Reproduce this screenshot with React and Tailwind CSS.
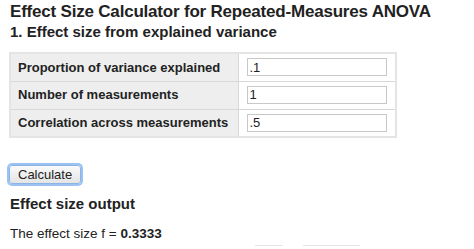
export default function App() {
  const rows = [
    { label: 'Proportion of variance explained', value: '.1' },
    { label: 'Number of measurements', value: '1' },
    { label: 'Correlation across measurements', value: '.5' },
  ];

  return (
    <div className="h-[249px] overflow-hidden bg-white px-[10px] pt-[1px] text-[#222] font-['Liberation_Sans',Arial,sans-serif]">
      <h1 className="text-[17px] font-bold leading-[22px] whitespace-nowrap tracking-[-0.2px]">
        Effect Size Calculator for Repeated-Measures ANOVA
      </h1>
      <h2 className="text-[15px] font-bold leading-[18px]">1. Effect size from explained variance</h2>

      <table className="mt-[11px] -ml-[1px] border-collapse border-2 border-[#e4e4e4]">
        <tbody>
          {rows.map((r) => (
            <tr key={r.label} className="h-[28px] border-b border-[#d8d8d8] last:border-b-0">
              <td className="w-[228px] bg-[#eeeeee] pl-[7px] pr-[6px] text-[13px] font-bold whitespace-nowrap border-r border-[#d8d8d8]">
                {r.label}
              </td>
              <td className="px-[8px]">
                <input
                  readOnly
                  value={r.value}
                  className="block w-[140px] h-[18px] border border-[#c8c8c8] px-[2px] text-[13px] text-[#222] outline-none"
                />
              </td>
            </tr>
          ))}
        </tbody>
      </table>

      <button className="mt-[27px] -ml-[1px] h-[19px] px-[8px] text-[13px] leading-none border border-[#8ab4e8] rounded-[3px] bg-gradient-to-b from-[#fafafa] to-[#e4e4e4] shadow-[0_0_0_2px_#9cc2f2]">
        Calculate
      </button>

      <h3 className="mt-[9px] text-[15px] font-bold leading-[18px]">Effect size output</h3>
      <p className="mt-[13px] text-[13.5px] leading-[16px]">
        The effect size f = <b>0.3333</b>
      </p>

      <div className="mt-[3px] flex pl-[245px]">
        <div className="w-[28px] border-t border-[#e6e6e6]" />
        <div className="w-[57px] ml-[20px] border-t border-[#e6e6e6]" />
      </div>
    </div>
  );
}
